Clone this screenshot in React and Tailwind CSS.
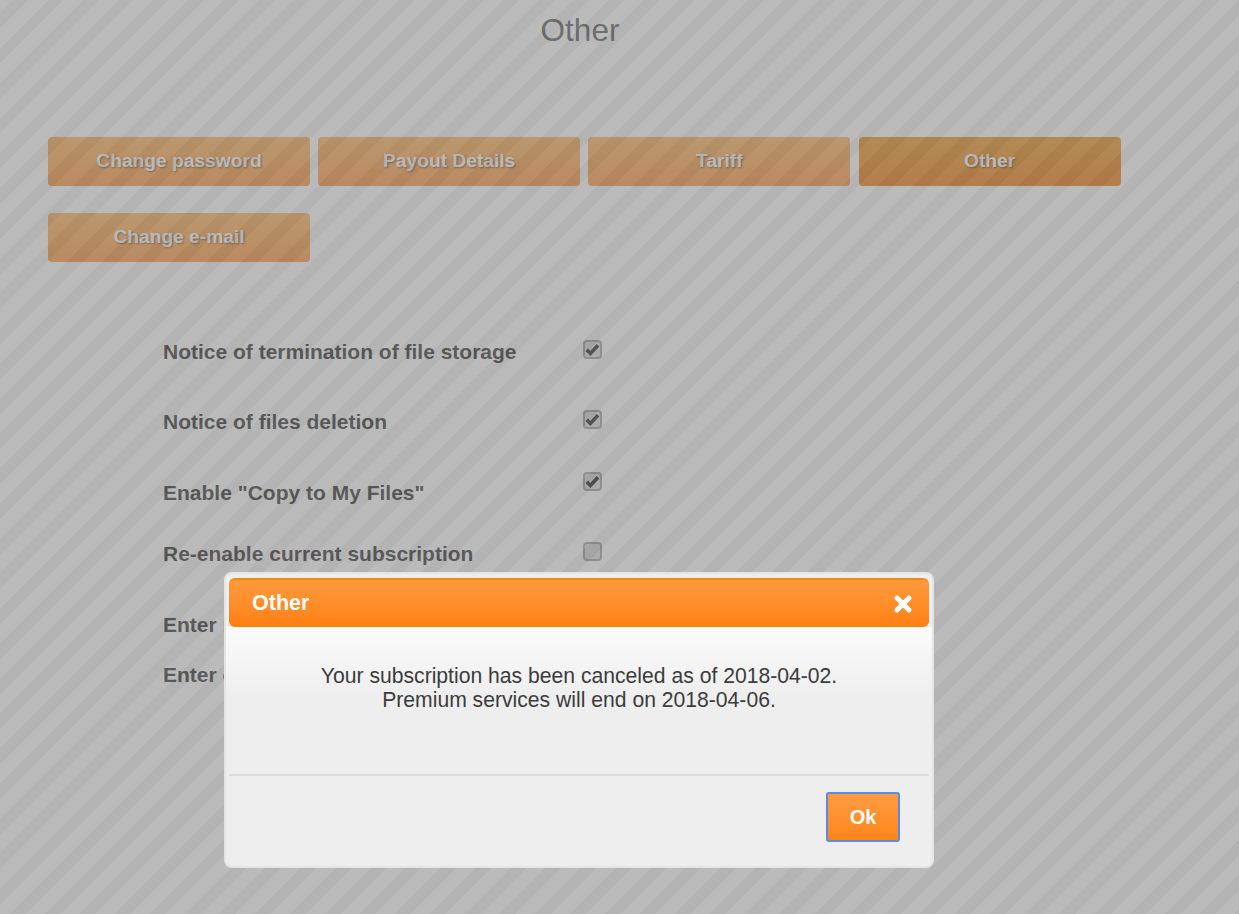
const tabs = ['Change password', 'Payout Details', 'Tariff', 'Other', 'Change e-mail'];

const settings = [
  { label: 'Notice of termination of file storage', checked: true, rowClass: 'h-[70px]', boxClass: 'mt-[5px]' },
  { label: 'Notice of files deletion', checked: true, rowClass: 'h-[71px]', boxClass: 'mt-[5px]' },
  { label: 'Enable "Copy to My Files"', checked: true, rowClass: 'h-[61px]', boxClass: '-mt-[4px]' },
  { label: 'Re-enable current subscription', checked: false, rowClass: 'h-[71px]', boxClass: 'mt-[5px]' },
  { label: 'Enter new password', rowClass: 'h-[50px]' },
  { label: 'Enter current password', rowClass: 'h-[50px]' },
];

function Checkbox({ checked, className }) {
  return (
    <span className={`flex h-[19px] w-[19px] items-center justify-center rounded-[4px] border-2 border-[#9a9a9a] bg-[#dcdcdc] ${className}`}>
      {checked && (
        <svg width="15" height="13" viewBox="0 0 15 13" fill="none">
          <path d="M1.8 6.8 5.4 10.4 13 2.2" stroke="#111" strokeWidth="3.6" />
        </svg>
      )}
    </span>
  );
}

export default function App() {
  return (
    <div className="relative min-h-[914px] overflow-hidden bg-white font-['Liberation_Sans',Arial,sans-serif]">
      <h1 className="w-[1160px] pt-[12px] text-center text-[31.5px] leading-[36px] text-[#4f4f4f]">Other</h1>

      {/* Tabs */}
      <div className="mt-[89px] ml-[48px] grid grid-cols-[262px_262px_262px_262px] gap-x-[8.2px] gap-y-[27px]">
        {tabs.map((tab) => (
          <button
            key={tab}
            className={`h-[49px] rounded-[4px] text-[19.2px] font-bold text-white [text-shadow:1px_1px_2px_rgba(0,0,0,0.6)] ${
              tab === 'Other'
                ? 'bg-gradient-to-b from-[#eb9210] to-[#f07200]'
                : 'bg-gradient-to-b from-[#ffaf50] to-[#ff9030]'
            }`}
          >
            {tab}
          </button>
        ))}
      </div>

      {/* Settings */}
      <div className="mt-[73px] ml-[163px] flex flex-col">
        {settings.map((row) => (
          <div key={row.label} className={`flex items-start ${row.rowClass}`}>
            <span className="w-[420px] text-[21px] leading-[34px] font-bold text-[#222]">{row.label}</span>
            {row.checked !== undefined && <Checkbox checked={row.checked} className={row.boxClass} />}
          </div>
        ))}
      </div>

      {/* Overlay */}
      <div className="absolute inset-0 bg-[repeating-linear-gradient(135deg,rgba(134,134,134,0.57)_0px,rgba(134,134,134,0.57)_9.2px,rgba(122,122,122,0.57)_9.2px,rgba(122,122,122,0.57)_20.5px,rgba(134,134,134,0.57)_20.5px,rgba(134,134,134,0.57)_24.75px)]" />

      {/* Dialog */}
      <div className="absolute left-[224px] top-[572px] flex h-[296px] w-[710px] flex-col rounded-[8px] border-2 border-[#e4e4e4] bg-[#eeeeee] px-[3px] pt-[4px]">
        <div className="flex h-[49px] shrink-0 items-center justify-between rounded-[6px] border-t-2 border-[#f28a10] bg-gradient-to-b from-[#ff9a3c] to-[#ff8010] pr-[17px] pl-[23px] text-white">
          <span className="text-[21.5px] font-bold">Other</span>
          <svg width="18" height="18" viewBox="0 0 18 18" fill="none">
            <path d="M3 3 15 15M15 3 3 15" stroke="#fff" strokeWidth="5" strokeLinecap="round" />
          </svg>
        </div>
        <div className="-mx-[3px] flex h-[147px] shrink-0 flex-col bg-gradient-to-b from-[#fbfbfb] to-[#eeeeee] to-[70px] pt-[37px] text-center text-[21.15px] leading-[24px] text-[#3c3c3c]">
          <p>Your subscription has been canceled as of 2018-04-02.</p>
          <p>Premium services will end on 2018-04-06.</p>
        </div>
        <div className="flex flex-1 items-start justify-end border-t-2 border-[#dddddd] pt-[16px] pr-[29px]">
          <button className="h-[50px] w-[74px] rounded-[3px] border-2 border-[#5b8ae6] bg-gradient-to-b from-[#ff9c42] to-[#ff8517] text-[20px] font-bold text-white">
            Ok
          </button>
        </div>
      </div>
    </div>
  );
}
